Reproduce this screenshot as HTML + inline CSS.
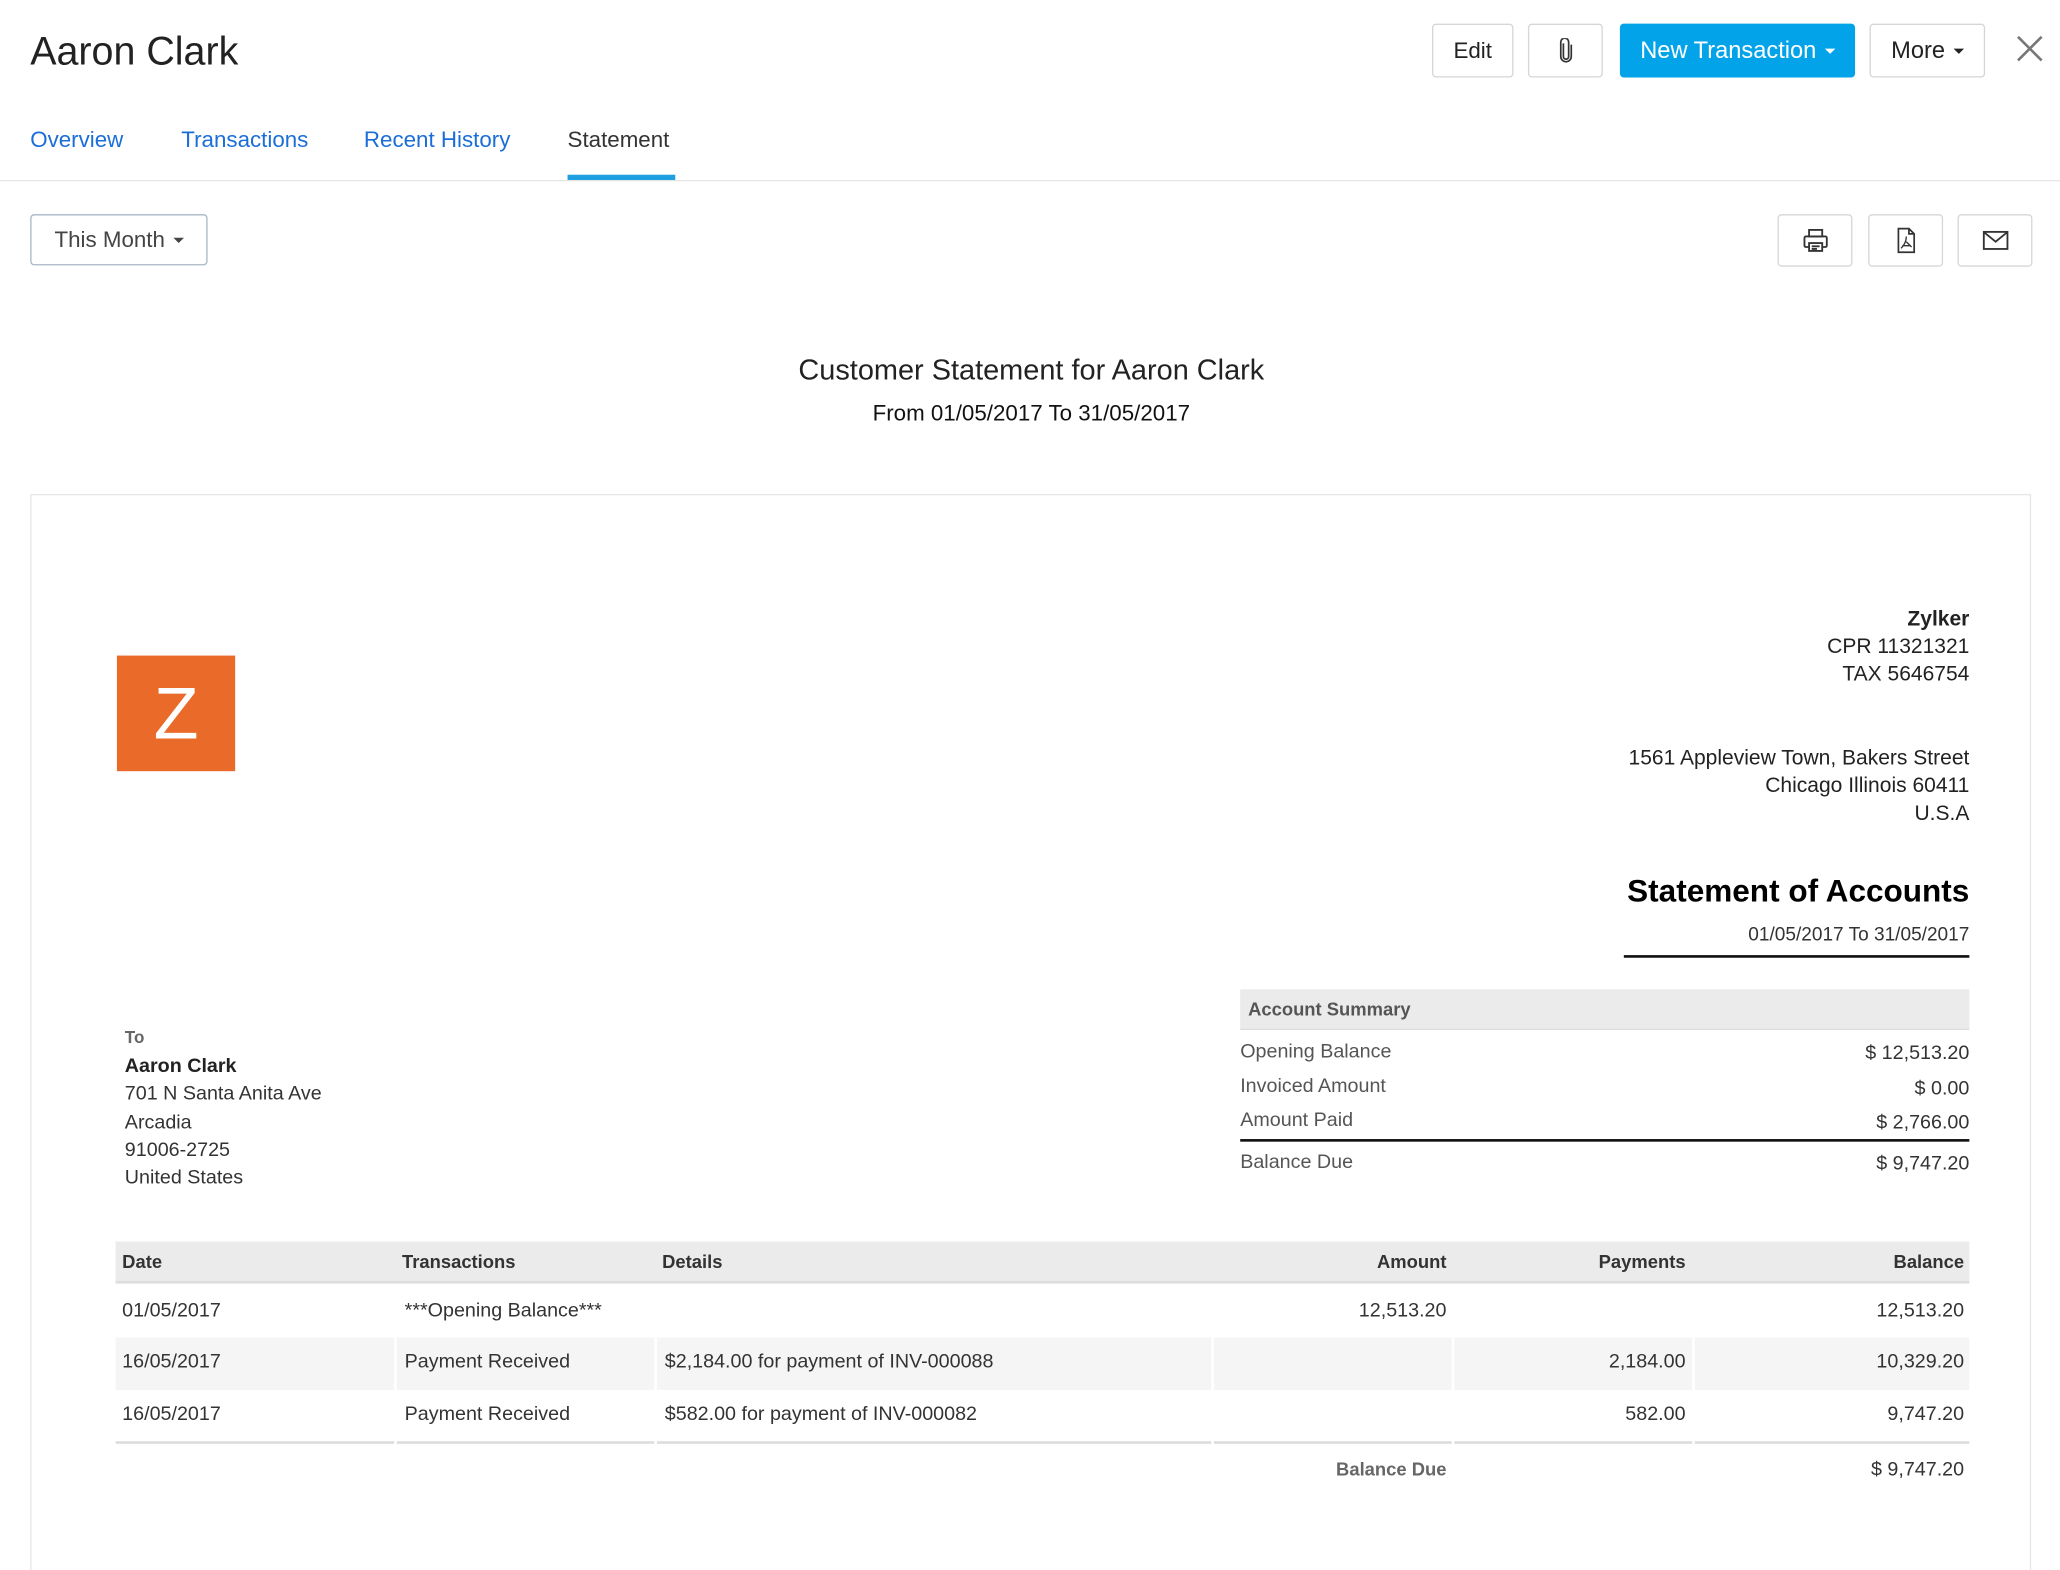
<!DOCTYPE html>
<html><head><meta charset="utf-8"><style>
html,body{margin:0;padding:0;background:#fff;overflow:hidden}
body{width:2060px;height:1570px;position:relative}
#s{position:absolute;left:0;top:0;width:1568px;height:1195px;transform:scale(1.31378);transform-origin:0 0;font-family:"Liberation Sans",sans-serif;color:#222}
.a{position:absolute;white-space:nowrap}
.btn{position:absolute;border:1px solid #d6d6d6;border-radius:3px;background:#fff;box-sizing:border-box;display:flex;align-items:center;justify-content:center;font-size:17px;color:#222}
.car{display:inline-block;width:0;height:0;border-left:4px solid transparent;border-right:4px solid transparent;border-top:4px solid currentColor;margin-left:6px;vertical-align:middle}
.r{text-align:right}
.t15{font-size:15px;color:#333}
.lbl{font-size:15px;color:#555}
</style></head><body><div id="s">
<div class="a" style="left:23px;top:23px;font-size:30px;font-weight:300;color:#222">Aaron Clark</div>

<div class="btn" style="left:1090px;top:18px;width:62px;height:41px">Edit</div>
<div class="btn" style="left:1163px;top:18px;width:57px;height:41px">
<svg width="12" height="20" viewBox="0 0 12 20"><path d="M4 4v10a2 2 0 0 0 4 0V3a3 3 0 0 0-6 0v11a4 4 0 0 0 8 0V5" fill="none" stroke="#333" stroke-width="1.3"/></svg></div>
<div class="btn" style="left:1233px;top:18px;width:179px;height:41px;background:#03a3e9;border-color:#03a3e9;color:#fff;font-size:18px">New Transaction<span class="car"></span></div>
<div class="btn" style="left:1423px;top:18px;width:88px;height:41px;font-size:18px">More<span class="car"></span></div>
<svg class="a" style="left:1535px;top:27px" width="20" height="20" viewBox="0 0 20 20"><path d="M1 1L19 19M19 1L1 19" stroke="#777" stroke-width="2"/></svg>

<div class="a" style="left:23px;top:97px;font-size:17px;color:#1b6ed8">Overview</div>
<div class="a" style="left:138px;top:97px;font-size:17px;color:#1b6ed8">Transactions</div>
<div class="a" style="left:277px;top:97px;font-size:17px;color:#1b6ed8">Recent History</div>
<div class="a" style="left:432px;top:97px;font-size:17px;color:#333">Statement</div>
<div class="a" style="left:0;top:137px;width:1568px;height:1px;background:#e5e5e5"></div>
<div class="a" style="left:432px;top:133px;width:82px;height:4px;background:#1ea0e0"></div>

<div class="btn" style="left:23px;top:163px;width:135px;height:39px;border-color:#a9b6c6;color:#444;font-size:17px">This Month<span class="car"></span></div>
<div class="btn" style="left:1353px;top:163px;width:57px;height:40px">
<svg width="20" height="20" viewBox="0 0 20 20" fill="none" stroke="#333" stroke-width="1.4"><rect x="5" y="2" width="10" height="5"/><rect x="1.5" y="7" width="17" height="8" rx="1"/><rect x="5" y="12" width="10" height="6" fill="#fff"/><path d="M7 14.5h6M7 16.5h4"/></svg></div>
<div class="btn" style="left:1422px;top:163px;width:57px;height:40px">
<svg width="16" height="20" viewBox="0 0 16 20" fill="none" stroke="#333" stroke-width="1.3"><path d="M2 1h8l4 4v14H2z M10 1v4h4"/><path d="M8 7c0 4-2 7-4 9M8 11l4 4M5 14h6" stroke-width="1"/></svg></div>
<div class="btn" style="left:1490px;top:163px;width:57px;height:40px">
<svg width="20" height="16" viewBox="0 0 20 16" fill="none" stroke="#333" stroke-width="1.4"><rect x="1" y="1.5" width="18" height="13"/><path d="M1.5 2l8.5 7 8.5-7"/></svg></div>

<div class="a" style="left:0;width:1570px;top:269px;text-align:center;font-size:22px;color:#222">Customer Statement for Aaron Clark</div>
<div class="a" style="left:0;width:1570px;top:305px;text-align:center;font-size:17px;color:#111">From 01/05/2017 To 31/05/2017</div>

<div class="a" style="left:23px;top:376px;width:1523px;height:830px;border:1px solid #e6e6e6;box-sizing:border-box"></div>

<div class="a" style="left:89px;top:499px;width:90px;height:88px;background:#ea6a2a;color:#fff;font-size:56px;text-align:center;line-height:88px">Z</div>

<div class="a r" style="right:69px;top:461px;font-size:16px;line-height:21px;color:#222"><b>Zylker</b><br>CPR 11321321<br>TAX 5646754</div>
<div class="a r" style="right:69px;top:567px;font-size:16px;line-height:21px;color:#222">1561 Appleview Town, Bakers Street<br>Chicago Illinois 60411<br>U.S.A</div>
<div class="a r" style="right:69px;top:665px;font-size:24px;font-weight:bold;color:#000">Statement of Accounts</div>
<div class="a r" style="right:69px;top:704px;font-size:14.5px;color:#333">01/05/2017 To 31/05/2017</div>
<div class="a" style="left:1236px;top:727px;width:263px;height:2px;background:#111"></div>

<div class="a" style="left:944px;top:753px;width:555px;height:31px;background:#ebebeb;border-bottom:1px solid #ddd;box-sizing:border-box"></div>
<div class="a" style="left:950px;top:760px;font-size:14px;font-weight:bold;color:#555">Account Summary</div>
<div class="a lbl" style="left:944px;top:792px">Opening Balance</div><div class="a r t15" style="right:69px;top:793px">$ 12,513.20</div>
<div class="a lbl" style="left:944px;top:818px">Invoiced Amount</div><div class="a r t15" style="right:69px;top:820px">$ 0.00</div>
<div class="a lbl" style="left:944px;top:844px">Amount Paid</div><div class="a r t15" style="right:69px;top:846px">$ 2,766.00</div>
<div class="a" style="left:944px;top:867px;width:555px;height:2px;background:#111"></div>
<div class="a lbl" style="left:944px;top:876px">Balance Due</div><div class="a r t15" style="right:69px;top:877px">$ 9,747.20</div>

<div class="a" style="left:95px;top:782px;font-size:13px;font-weight:bold;color:#666">To</div>
<div class="a" style="left:95px;top:801px;font-size:15px;line-height:21.3px;color:#333"><b style="color:#222">Aaron Clark</b><br>701 N Santa Anita Ave<br>Arcadia<br>91006-2725<br>United States</div>

<div class="a" style="left:88px;top:945px;width:1411px;height:32px;background:#ebebeb;border-bottom:2px solid #ddd;box-sizing:border-box"></div>
<div class="a" style="left:93px;top:952px;font-size:14px;font-weight:bold;color:#333">Date</div>
<div class="a" style="left:306px;top:952px;font-size:14px;font-weight:bold;color:#333">Transactions</div>
<div class="a" style="left:504px;top:952px;font-size:14px;font-weight:bold;color:#333">Details</div>
<div class="a r" style="right:467px;top:952px;font-size:14px;font-weight:bold;color:#333">Amount</div>
<div class="a r" style="right:285px;top:952px;font-size:14px;font-weight:bold;color:#333">Payments</div>
<div class="a r" style="right:73px;top:952px;font-size:14px;font-weight:bold;color:#333">Balance</div>

<div class="a t15" style="left:93px;top:989px">01/05/2017</div>
<div class="a t15" style="left:308px;top:989px">***Opening Balance***</div>
<div class="a r t15" style="right:467px;top:989px">12,513.20</div>
<div class="a r t15" style="right:73px;top:989px">12,513.20</div>

<div class="a" style="left:88px;top:1018px;width:1411px;height:40px;background:#f5f5f5"></div>
<div class="a t15" style="left:93px;top:1028px">16/05/2017</div>
<div class="a t15" style="left:308px;top:1028px">Payment Received</div>
<div class="a t15" style="left:506px;top:1028px">$2,184.00 for payment of INV-000088</div>
<div class="a r t15" style="right:285px;top:1028px">2,184.00</div>
<div class="a r t15" style="right:73px;top:1028px">10,329.20</div>

<div class="a t15" style="left:93px;top:1068px">16/05/2017</div>
<div class="a t15" style="left:308px;top:1068px">Payment Received</div>
<div class="a t15" style="left:506px;top:1068px">$582.00 for payment of INV-000082</div>
<div class="a r t15" style="right:285px;top:1068px">582.00</div>
<div class="a r t15" style="right:73px;top:1068px">9,747.20</div>
<div class="a" style="left:88px;top:1097px;width:1411px;height:2px;background:#ddd"></div>
<div class="a" style="left:300px;top:1018px;width:2px;height:82px;background:#fff"></div>
<div class="a" style="left:498px;top:1018px;width:2px;height:82px;background:#fff"></div>
<div class="a" style="left:922px;top:1018px;width:2px;height:82px;background:#fff"></div>
<div class="a" style="left:1105px;top:1018px;width:2px;height:82px;background:#fff"></div>
<div class="a" style="left:1288px;top:1018px;width:2px;height:82px;background:#fff"></div>

<div class="a r" style="right:467px;top:1110px;font-size:14px;font-weight:bold;color:#666">Balance Due</div>
<div class="a r t15" style="right:73px;top:1110px">$ 9,747.20</div>
</div></body></html>
